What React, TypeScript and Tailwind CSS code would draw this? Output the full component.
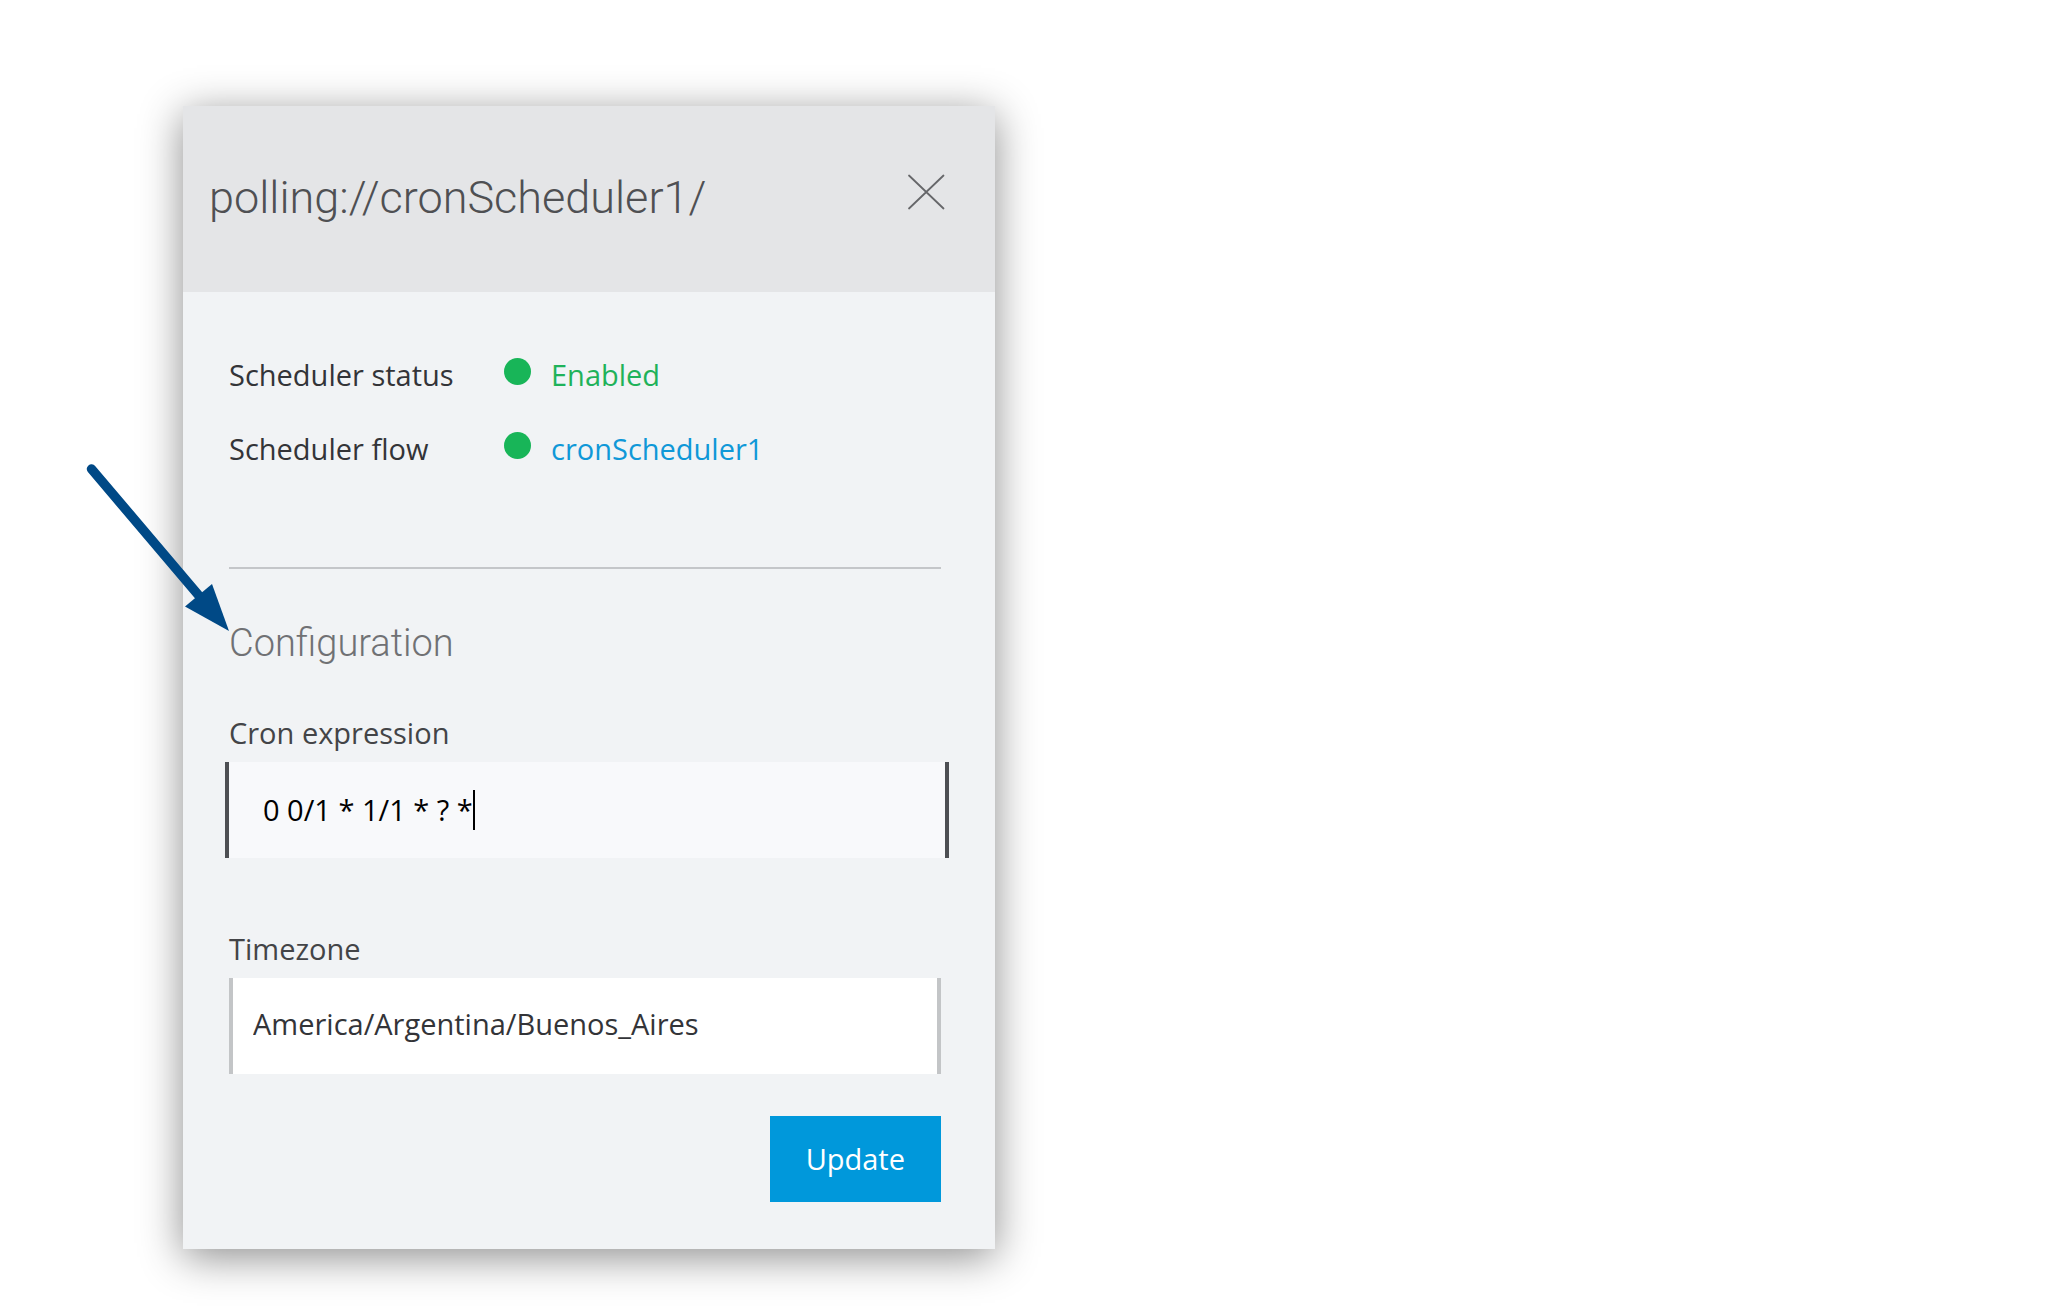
import React from "react";

const titleFont = "font-['Roboto',sans-serif]";
const bodyFont = "font-['Open_Sans','Noto_Sans',sans-serif]";

function StatusRow({ label, children }: { label: string; children: React.ReactNode }) {
  return (
    <div className="flex h-[74px] items-center">
      <dt className="w-[275px] text-[#333438]">{label}</dt>
      <dd className="flex items-center gap-5">
        <span className="mb-2 size-[27px] rounded-full bg-[#18b558]" aria-hidden="true" />
        {children}
      </dd>
    </div>
  );
}

function Pointer() {
  return (
    <svg
      className="pointer-events-none absolute -left-[103px] top-[350px]"
      width="160"
      height="190"
      viewBox="80 456 160 190"
      aria-hidden="true"
    >
      <path d="M91.500 469 L206 604" stroke="#004986" strokeWidth="9.500" strokeLinecap="round" />
      <path d="M229 631 L185 606.500 L212 584 Z" fill="#004986" />
    </svg>
  );
}

export default function App() {
  return (
    <main className={`min-h-screen bg-white px-4 pt-[106px] sm:pl-[183px] ${bodyFont}`}>
      <section
        aria-labelledby="panel-title"
        className="relative w-full max-w-[812px] bg-[#f1f3f5] text-[29px] leading-10 shadow-[0_8px_40px_rgba(0,0,0,0.45)]"
      >
        <header className="flex h-[186px] items-center justify-between bg-[#e4e5e7] pl-[26px] pr-[49px]">
          <h1 id="panel-title" className={`mb-0.5 text-[45px] font-[350] leading-[56px] text-[#4f5053] ${titleFont}`}>
            polling://cronScheduler1/
          </h1>
          <button type="button" aria-label="Close" className="mb-3.5">
            <svg width="40" height="40" viewBox="0 0 40 40" fill="none" stroke="#66676a" strokeWidth="1.800" strokeLinecap="round">
              <path d="M3 3.500 L37.500 36.500 M37.500 3.500 L3 36.500" />
            </svg>
          </button>
        </header>

        <div className="pb-[47px] pl-[46px] pr-[54px] pt-[46px]">
          <dl>
            <StatusRow label="Scheduler status">
              <span className="text-[#1fb25a]">Enabled</span>
            </StatusRow>
            <StatusRow label="Scheduler flow">
              <a href="#flow" className="text-[#0f98d8]">
                cronScheduler1
              </a>
            </StatusRow>
          </dl>

          <hr className="mt-[81px] border-t-2 border-[#c4c6c9]" />

          <form onSubmit={(e) => e.preventDefault()}>
            <h2 className={`mt-[50px] text-[38px] font-light leading-[48px] text-[#707174] ${titleFont}`}>
              Configuration
            </h2>

            <label htmlFor="cron" className="mt-[46px] block text-[#434447]">
              Cron expression
            </label>
            <div className="-ml-1 -mr-2 mt-[9px] flex h-24 items-center border-x-4 border-[#4d4f53] bg-[#f8f9fb] pl-[34px]">
              <input
                id="cron"
                type="text"
                defaultValue="0 0/1 * 1/1 * ? *"
                className="field-sizing-content bg-transparent text-black caret-transparent outline-none"
              />
              <span className="h-10 w-0.5 bg-black" aria-hidden="true" />
            </div>

            <label htmlFor="timezone" className="mt-[71px] block text-[#434447]">
              Timezone
            </label>
            <select
              id="timezone"
              className="mt-[9px] block h-24 w-full appearance-none border-x-4 border-[#c3c5c7] bg-white pb-1 pl-5 text-[#333438] outline-none"
            >
              <option>America/Argentina/Buenos_Aires</option>
            </select>

            <div className="mt-[42px] flex justify-end">
              <button type="submit" className="h-[86px] bg-[#0098db] px-9 text-white">
                Update
              </button>
            </div>
          </form>
        </div>
        <Pointer />
      </section>
    </main>
  );
}
